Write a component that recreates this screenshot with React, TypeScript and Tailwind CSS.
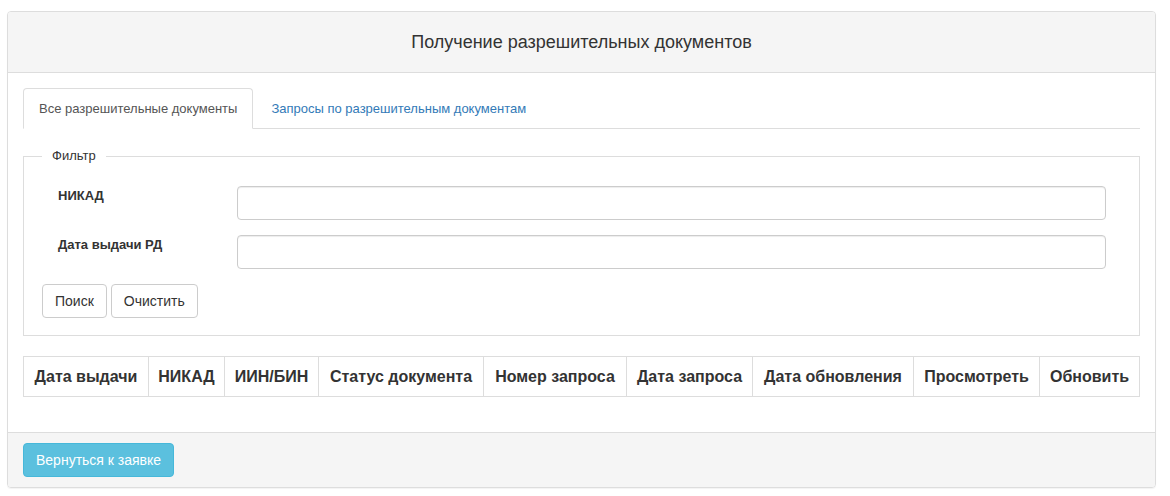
export default function App() {
  const columns = [
    { title: 'Дата выдачи', w: 'w-[125px]' },
    { title: 'НИКАД', w: 'w-[76px]' },
    { title: 'ИИН/БИН', w: 'w-[94px]' },
    { title: 'Статус документа', w: 'w-[165px]' },
    { title: 'Номер запроса', w: 'w-[143px]' },
    { title: 'Дата запроса', w: 'w-[126px]' },
    { title: 'Дата обновления', w: 'w-[161px]' },
    { title: 'Просмотреть', w: 'w-[126px]' },
    { title: 'Обновить', w: 'w-[100px]' },
  ];

  return (
    <div className="min-h-[496px] bg-white pt-[11px] pl-[7px] font-['Liberation_Sans',Arial,sans-serif] text-[14px] text-[#333]">
      <div className="w-[1149px] border border-[#ddd] rounded-[4px] shadow-[0_1px_1px_rgba(0,0,0,0.05)]">
        {/* Header */}
        <div className="h-[61px] bg-[#f5f5f5] border-b border-[#ddd] rounded-t-[3px] flex items-center justify-center">
          <h3 className="text-[18px] leading-[20px] text-[#333]">Получение разрешительных документов</h3>
        </div>

        {/* Body */}
        <div className="px-[15px] pt-[15px] pb-[35px]">
          {/* Tabs */}
          <div className="flex border-b border-[#ddd] w-[1117px]">
            <div className="-mb-px px-[15px] h-[41px] flex items-center border border-[#ddd] border-b-white bg-white rounded-t-[4px] text-[13px] text-[#555]">
              Все разрешительные документы
            </div>
            <div className="ml-[2px] -mb-px px-[15px] h-[41px] flex items-center border border-transparent text-[13px] text-[#337ab7]">
              Запросы по разрешительным документам
            </div>
          </div>

          {/* Filter */}
          <fieldset className="mt-[18px] w-[1117px] border border-[#ddd] px-[18px] pt-[21px] pb-[17px]">
            <legend className="px-[10px] text-[13px] leading-[18px] text-[#333]">Фильтр</legend>
            <div className="flex">
              <label className="w-[195px] pl-[16px] font-bold text-[13px] leading-[18px] pt-[1px]">НИКАД</label>
              <input className="w-[869px] h-[34px] border border-[#ccc] rounded-[4px] shadow-[inset_0_1px_1px_rgba(0,0,0,0.075)] px-3 outline-none" />
            </div>
            <div className="flex mt-[15px]">
              <label className="w-[195px] pl-[16px] font-bold text-[13px] leading-[18px] pt-[1px]">Дата выдачи РД</label>
              <input className="w-[869px] h-[34px] border border-[#ccc] rounded-[4px] shadow-[inset_0_1px_1px_rgba(0,0,0,0.075)] px-3 outline-none" />
            </div>
            <div className="flex gap-[4px] mt-[15px]">
              <button className="h-[34px] px-[12px] border border-[#ccc] rounded-[4px] bg-white text-[14px] text-[#333]">Поиск</button>
              <button className="h-[34px] px-[12px] border border-[#ccc] rounded-[4px] bg-white text-[14px] text-[#333]">Очистить</button>
            </div>
          </fieldset>

          {/* Table */}
          <table className="mt-[20px] w-[1117px] border-collapse table-fixed">
            <thead>
              <tr>
                {columns.map(c => (
                  <th key={c.title} className={`${c.w} h-[40px] border border-[#ddd] px-[8px] text-center text-[16px] font-bold text-[#333] whitespace-nowrap`}>
                    {c.title}
                  </th>
                ))}
              </tr>
            </thead>
          </table>
        </div>

        {/* Footer */}
        <div className="bg-[#f5f5f5] border-t border-[#ddd] rounded-b-[3px] px-[15px] py-[10px]">
          <button className="h-[34px] px-[12px] bg-[#5bc0de] border border-[#46b8da] rounded-[4px] text-white text-[14px]">
            Вернуться к заявке
          </button>
        </div>
      </div>
    </div>
  );
}
